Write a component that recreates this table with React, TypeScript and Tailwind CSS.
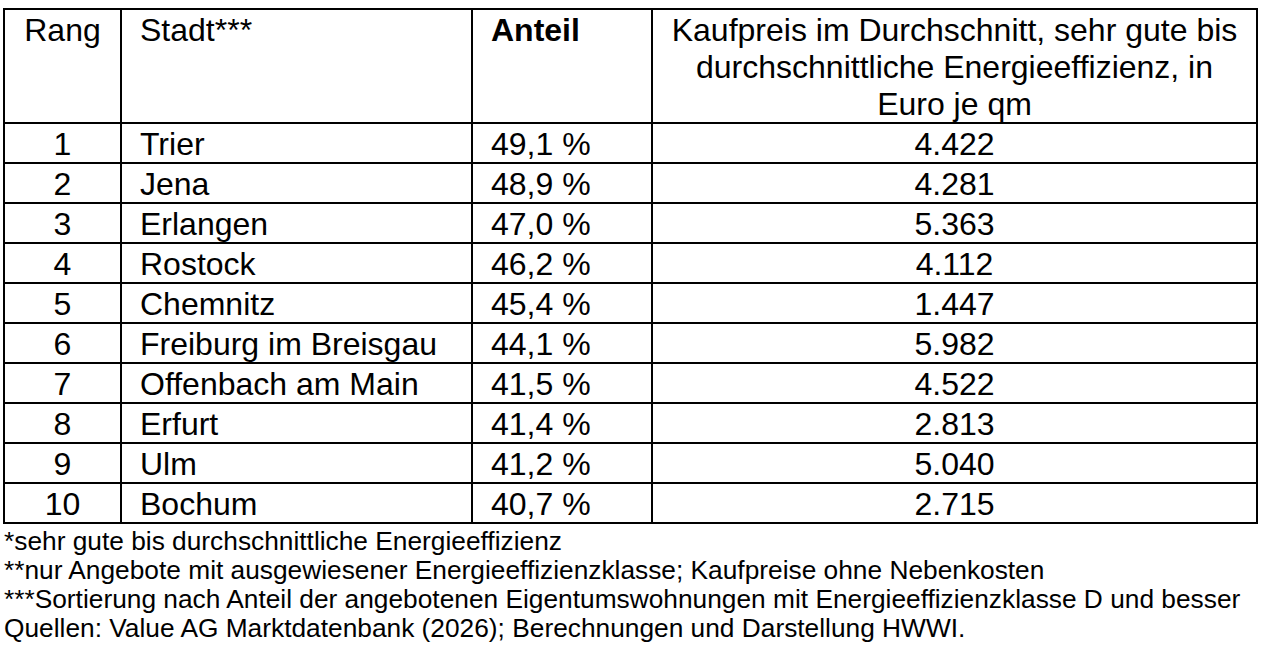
import React from "react";

const rows: [string, string, string, string][] = [
  ["1", "Trier", "49,1 %", "4.422"],
  ["2", "Jena", "48,9 %", "4.281"],
  ["3", "Erlangen", "47,0 %", "5.363"],
  ["4", "Rostock", "46,2 %", "4.112"],
  ["5", "Chemnitz", "45,4 %", "1.447"],
  ["6", "Freiburg im Breisgau", "44,1 %", "5.982"],
  ["7", "Offenbach am Main", "41,5 %", "4.522"],
  ["8", "Erfurt", "41,4 %", "2.813"],
  ["9", "Ulm", "41,2 %", "5.040"],
  ["10", "Bochum", "40,7 %", "2.715"],
];

const cell = "border-r-2 border-b-2 border-black pt-[2px] whitespace-nowrap";

export default function App() {
  return (
    <div
      className="bg-white text-black pt-[8px] pl-[3px] min-h-[661px]"
      style={{ fontFamily: '"Liberation Sans", Arial, sans-serif' }}
    >
      <div className="grid grid-cols-[117px_351px_180px_605px] w-fit border-l-2 border-t-2 border-black text-[32px] leading-[37px]">
        <div className={`${cell} h-[114px] text-center`}>Rang</div>
        <div className={`${cell} h-[114px] pl-[18px]`}>Stadt***</div>
        <div className={`${cell} h-[114px] pl-[18px] font-bold`}>Anteil</div>
        <div className={`${cell} h-[114px] text-center`}>
          Kaufpreis im Durchschnitt, sehr gute bis
          <br />
          durchschnittliche Energieeffizienz, in
          <br />
          Euro je qm
        </div>
        {rows.map(([r, s, a, k]) => (
          <React.Fragment key={r}>
            <div className={`${cell} h-[40px] text-center`}>{r}</div>
            <div className={`${cell} h-[40px] pl-[18px]`}>{s}</div>
            <div className={`${cell} h-[40px] pl-[18px]`}>{a}</div>
            <div className={`${cell} h-[40px] text-center`}>{k}</div>
          </React.Fragment>
        ))}
      </div>
      <div className="text-[26.3px] leading-[29px] pt-[3px] pl-[1px] whitespace-nowrap">
        <p>*sehr gute bis durchschnittliche Energieeffizienz</p>
        <p>**nur Angebote mit ausgewiesener Energieeffizienzklasse; Kaufpreise ohne Nebenkosten</p>
        <p>***Sortierung nach Anteil der angebotenen Eigentumswohnungen mit Energieeffizienzklasse D und besser</p>
        <p>Quellen: Value AG Marktdatenbank (2026); Berechnungen und Darstellung HWWI.</p>
      </div>
    </div>
  );
}
